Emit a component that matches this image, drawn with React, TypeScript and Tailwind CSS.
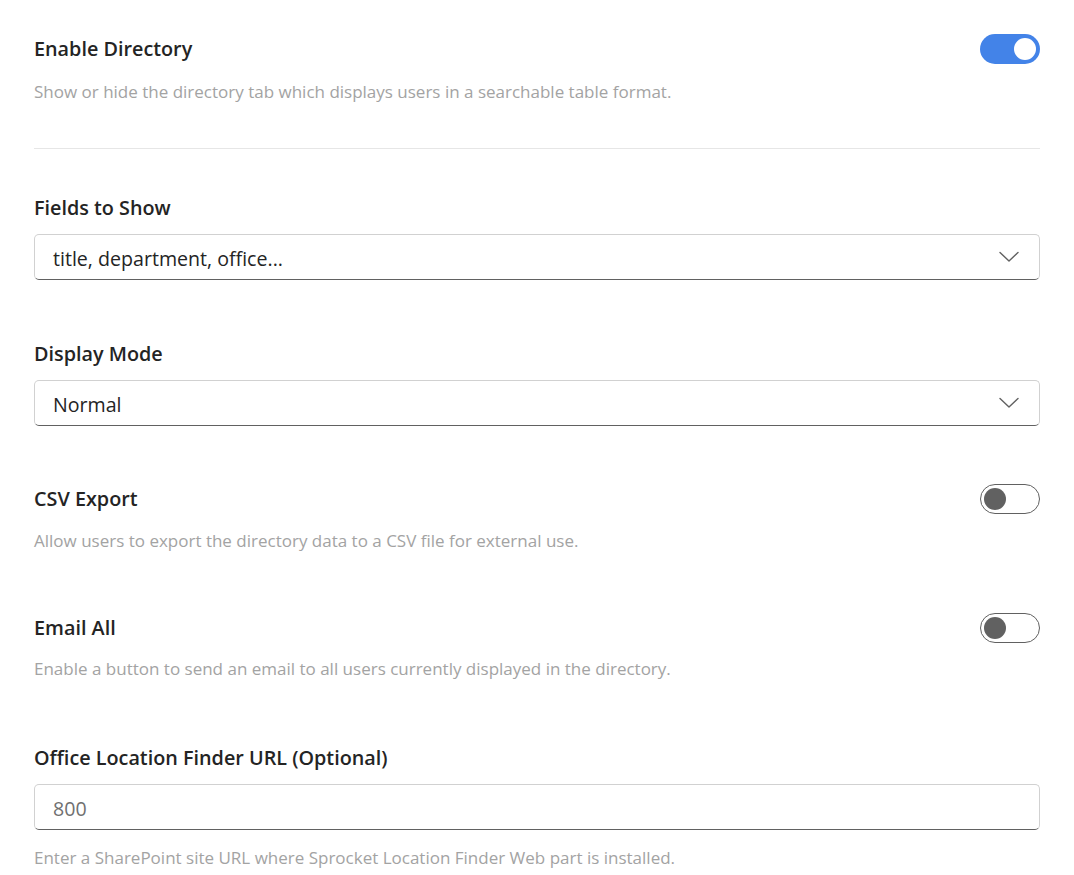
import React from "react";

function Toggle({ on }: { on: boolean }) {
  return on ? (
    <div className="w-[60px] h-[30px] rounded-full bg-[#4383e8] flex items-center justify-end px-[4px] shrink-0">
      <div className="w-[22px] h-[22px] rounded-full bg-white" />
    </div>
  ) : (
    <div className="w-[60px] h-[30px] rounded-full border border-[#616161] bg-white flex items-center justify-start px-[3px] shrink-0">
      <div className="w-[22px] h-[22px] rounded-full bg-[#616161]" />
    </div>
  );
}

function Chevron() {
  return (
    <svg width="20" height="12" viewBox="0 0 20 12" fill="none" className="shrink-0">
      <path d="M1 1.5 L10 10 L19 1.5" stroke="#616161" strokeWidth="1.4" strokeLinecap="round" strokeLinejoin="round" />
    </svg>
  );
}

function Field({ value, muted, chevron }: { value: string; muted?: boolean; chevron?: boolean }) {
  return (
    <div className="h-[46px] rounded-[5px] border border-[#d1d1d1] border-b-[#616161] bg-white flex items-center justify-between pl-[18px] pr-[20px]">
      <span className={`text-[19.6px] leading-[28px] pt-[3px] ${muted ? "text-[#707070]" : "text-[#242424]"}`}>{value}</span>
      {chevron && <Chevron />}
    </div>
  );
}

function Label({ children }: { children: React.ReactNode }) {
  return <div className="text-[19.8px] leading-[28px] font-semibold text-[#242424]">{children}</div>;
}

function Desc({ children }: { children: React.ReactNode }) {
  return <div className="text-[17px] leading-[24px] text-[#a3a3a3]">{children}</div>;
}

export default function App() {
  return (
    <div
      className="w-[1074px] h-[875px] bg-white px-[34px] pt-[34px] overflow-hidden"
      style={{ fontFamily: '"Segoe UI", "Open Sans", "Noto Sans", sans-serif' }}
    >
      <div className="flex items-center justify-between h-[30px]">
        <Label>Enable Directory</Label>
        <Toggle on />
      </div>
      <div className="mt-[16px]">
        <Desc>Show or hide the directory tab which displays users in a searchable table format.</Desc>
      </div>
      <div className="mt-[44px] h-px bg-[#e6e6e6]" />

      <div className="mt-[45px]">
        <Label>Fields to Show</Label>
      </div>
      <div className="mt-[12px]">
        <Field value="title, department, office..." chevron />
      </div>

      <div className="mt-[60px]">
        <Label>Display Mode</Label>
      </div>
      <div className="mt-[12px]">
        <Field value="Normal" chevron />
      </div>

      <div className="mt-[58px] flex items-center justify-between h-[30px]">
        <Label>CSV Export</Label>
        <Toggle on={false} />
      </div>
      <div className="mt-[15px]">
        <Desc>Allow users to export the directory data to a CSV file for external use.</Desc>
      </div>

      <div className="mt-[60px] flex items-center justify-between h-[30px]">
        <Label>Email All</Label>
        <Toggle on={false} />
      </div>
      <div className="mt-[14px]">
        <Desc>Enable a button to send an email to all users currently displayed in the directory.</Desc>
      </div>

      <div className="mt-[63px]">
        <Label>Office Location Finder URL (Optional)</Label>
      </div>
      <div className="mt-[12px]">
        <Field value="800" muted />
      </div>
      <div className="mt-[16px]">
        <Desc>Enter a SharePoint site URL where Sprocket Location Finder Web part is installed.</Desc>
      </div>
    </div>
  );
}
